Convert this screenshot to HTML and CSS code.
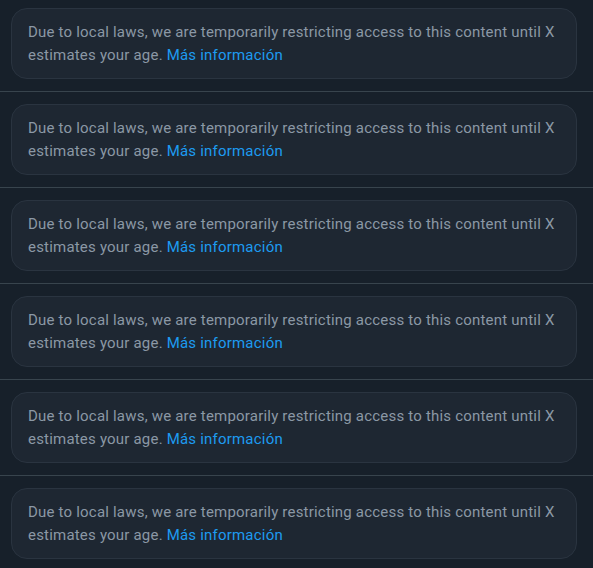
FILE: index.html
```html
<!DOCTYPE html>
<html>
<head>
<meta charset="utf-8">
<link rel="stylesheet" href="styles.css">
</head>
<body>
<div class="feed">
  <div class="item"><div class="notice">Due to local laws, we are temporarily restricting access to this content until X estimates your age. <a class="link" href="#">Más información</a></div></div>
  <div class="item"><div class="notice">Due to local laws, we are temporarily restricting access to this content until X estimates your age. <a class="link" href="#">Más información</a></div></div>
  <div class="item"><div class="notice">Due to local laws, we are temporarily restricting access to this content until X estimates your age. <a class="link" href="#">Más información</a></div></div>
  <div class="item"><div class="notice">Due to local laws, we are temporarily restricting access to this content until X estimates your age. <a class="link" href="#">Más información</a></div></div>
  <div class="item"><div class="notice">Due to local laws, we are temporarily restricting access to this content until X estimates your age. <a class="link" href="#">Más información</a></div></div>
  <div class="item"><div class="notice">Due to local laws, we are temporarily restricting access to this content until X estimates your age. <a class="link" href="#">Más información</a></div></div>
</div>
</body>
</html>
```
FILE: styles.css
```css
html, body {
  margin: 0;
  padding: 0;
  background: #17202a;
}
body {
  font-family: Roboto, "Liberation Sans", sans-serif;
}
.feed {
  display: flex;
  flex-direction: column;
  margin-top: -4px;
}
.item {
  padding: 12px 16px 12px 11px;
  border-bottom: 1px solid #38444d;
}
.notice {
  background: #1e2732;
  border: 1px solid #2a3440;
  border-radius: 16px;
  padding: 12px 12px 11px 16px;
  color: #8b98a5;
  font-size: 15px;
  line-height: 23px;
  letter-spacing: 0.2px;
}
.link {
  color: #1d9bf0;
  text-decoration: none;
}
```
